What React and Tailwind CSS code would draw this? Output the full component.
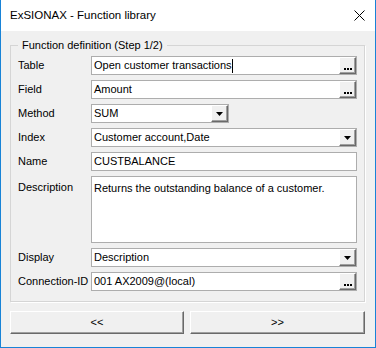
import React from 'react';

const Raised = ({ children, className = '' }) => (
  <div
    className={`flex items-center justify-center bg-[#f0f0f0] border border-t-white border-l-white border-r-[#696969] border-b-[#696969] shadow-[inset_-1px_-1px_0_#a0a0a0] ${className}`}
  >
    {children}
  </div>
);

const Dots = () => (
  <Raised className="w-[17px] h-full items-end pb-[3px]">
    <svg width="8" height="2" viewBox="0 0 8 2">
      <rect x="0" y="0" width="2" height="2" fill="#000" />
      <rect x="3" y="0" width="2" height="2" fill="#000" />
      <rect x="6" y="0" width="2" height="2" fill="#000" />
    </svg>
  </Raised>
);

const Arrow = () => (
  <Raised className="w-[17px] h-full">
    <svg width="7" height="4" viewBox="0 0 7 4">
      <polygon points="0,0 7,0 3.5,4" fill="#000" />
    </svg>
  </Raised>
);

const Box = ({ children, button, className = 'flex-1' }) => (
  <div className={`${className} h-[19px] flex items-stretch border border-[#adadad] bg-white`}>
    <div className="flex-1 flex items-center px-[2px] whitespace-nowrap overflow-hidden">{children}</div>
    {button}
  </div>
);

const Row = ({ label, children }) => (
  <div className="flex items-center">
    <div className="w-[73px] shrink-0">{label}</div>
    {children}
  </div>
);

export default function App() {
  return (
    <div className="w-[376px] h-[348px] flex flex-col border-x border-b border-[#1883d7] bg-[#f0f0f0] text-black font-['Liberation_Sans',Arial,sans-serif] text-[11px]">
      {/* Title bar */}
      <div className="h-[31px] shrink-0 bg-white flex items-center justify-between pl-[9px] pr-[8px]">
        <span className="text-[11.5px]">ExSIONAX - Function library</span>
        <svg width="11" height="11" viewBox="0 0 11 11" className="mr-[2px]">
          <path d="M0.5 0.5 L10.5 10.5 M10.5 0.5 L0.5 10.5" stroke="#000" strokeWidth="1" fill="none" />
        </svg>
      </div>

      <div className="flex-1 flex flex-col pl-[9px] pr-[10px] pt-[6px]">
        <fieldset className="border border-[#d5d5d5] shadow-[1px_1px_0_#fff] pl-[7px] pr-[7px] pt-[3px] pb-[10px] flex flex-col gap-[5px]">
          <legend className="px-[4px] leading-[16px]">Function definition (Step 1/2)</legend>

          <Row label="Table">
            <Box button={<Dots />}>
              <span>Open customer transactions</span>
              <span className="inline-block w-px h-[14px] bg-black" />
            </Box>
          </Row>
          <Row label="Field">
            <Box button={<Dots />}>Amount</Box>
          </Row>
          <Row label="Method">
            <Box className="w-[138px]" button={<Arrow />}>SUM</Box>
          </Row>
          <Row label="Index">
            <Box button={<Arrow />}>Customer account,Date</Box>
          </Row>
          <Row label="Name">
            <Box>CUSTBALANCE</Box>
          </Row>
          <div className="flex items-start">
            <div className="w-[73px] shrink-0 pt-[3px]">Description</div>
            <div className="flex-1 h-[67px] border border-[#adadad] bg-white px-[2px] pt-[3px]">
              Returns the outstanding balance of a customer.
            </div>
          </div>
          <Row label="Display">
            <Box button={<Arrow />}>Description</Box>
          </Row>
          <Row label="Connection-ID">
            <Box button={<Dots />}>001 AX2009@(local)</Box>
          </Row>
        </fieldset>

        <div className="flex gap-[6px] mt-[9px]">
          <Raised className="w-[175px] h-[23px]">&lt;&lt;</Raised>
          <Raised className="w-[176px] h-[23px]">&gt;&gt;</Raised>
        </div>
      </div>
    </div>
  );
}
